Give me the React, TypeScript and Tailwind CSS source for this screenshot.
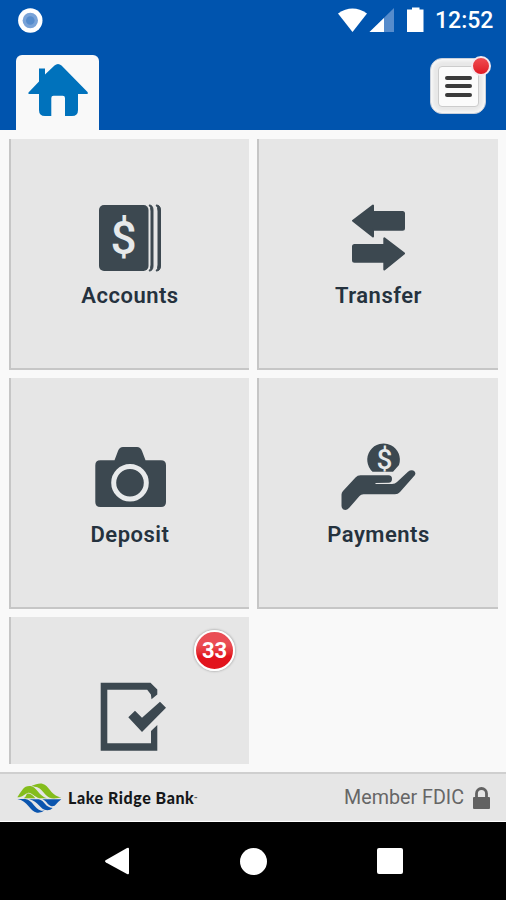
import type { ReactNode } from "react";

const INK = "#3c4850";

type TileProps = {
    icon: ReactNode;
    label: string;
    badge?: number;
};

function IconFrame({ children }: { children: ReactNode }) {
    return (
        <svg width="96" height="80" viewBox="0 0 96 80" fill={INK} className="shrink-0" aria-hidden="true">
            {children}
        </svg>
    );
}

function AccountsIcon() {
    return (
        <IconFrame>
            <rect x="17" y="9" width="49.5" height="66" rx="5" />
            <path d="M67 9Q71 9 71 14V70Q71 75 67 75Q69 73 69 69V15Q69 11 67 9Z" stroke={INK} strokeWidth="1" />
            <path d="M74 9Q78.5 9 78.5 14V70Q78.5 75 74 75Q76 73 76 69V15Q76 11 74 9Z" stroke={INK} strokeWidth="1" />
            <text
                x="41.5"
                y="58"
                textAnchor="middle"
                fill="#e6e9ea"
                className="font-['Roboto',sans-serif] text-[46px] font-medium"
            >
                $
            </text>
        </IconFrame>
    );
}

function TransferIcon() {
    return (
        <IconFrame>
            <g stroke={INK} strokeWidth="2" strokeLinejoin="round">
                <path d="M22 24.700 42 9.500V16H71.500Q73 16 73 17.500V32.200Q73 33.700 71.500 33.700H42V40.500Z" />
                <path d="M73 57.400 53.300 42.300V49H23.500Q22 49 22 50.500V64.200Q22 65.700 23.500 65.700H53.300V73.500Z" />
            </g>
        </IconFrame>
    );
}

function DepositIcon() {
    return (
        <IconFrame>
            <path d="M18.300 25.300H32.500L36 16Q37.500 12 41 12H55Q58.500 12 60 16L63.500 25.300H79Q84 25.300 84 30.300V67Q84 72 79 72H18.300Q13.300 72 13.300 67V30.300Q13.300 25.300 18.300 25.300Z" />
            <circle cx="48" cy="47.700" r="16.300" fill="none" stroke="#e8eaeb" strokeWidth="5" />
        </IconFrame>
    );
}

function PaymentsIcon() {
    return (
        <IconFrame>
            <g transform="translate(-1.500 0)">
                <path d="M43 36.700A16.300 16.300 0 1 1 69.500 30L63.500 36.700Z" />
                <text
                    x="55"
                    y="34"
                    textAnchor="middle"
                    fill="#e6e9ea"
                    className="font-['Roboto',sans-serif] text-[28px] font-medium"
                >
                    $
                </text>
                <path d="M12 59.500Q12 57.500 13.500 56L26 42.500Q28 40.300 31 40.300H59Q62.500 40.300 62.500 44T59 47.700L46 47.900V48.900H62.500Q65.500 48.900 67.500 46.900L78.500 36.700Q81 34.700 83.800 35.500Q86.800 37 85.500 40L70.500 57Q68.500 59.200 65.500 59.200H34Q31.500 59.200 30 61L20 72.500Q17 76 14 74.600Q12 73.600 12 71Z" />
            </g>
        </IconFrame>
    );
}

function ApprovalsIcon() {
    return (
        <IconFrame>
            <path d="M18.700 8.700H68.500L75.300 15.500V20.500L69.500 25.300L68.900 20.500L65.200 15.700H25.300V69.300H69V57L75.300 51V76.700H18.700Z" />
            <path d="M46.300 43.300 53 36.700 60 43.700 78 27.700 84 33.700 60 58Z" />
        </IconFrame>
    );
}

function Tile({ icon, label, badge }: TileProps) {
    return (
        <button
            type="button"
            className="relative flex h-[231px] flex-col items-center border-b-2 border-l-2 border-[#c6c6c6] bg-[#e6e6e6] pt-[57px]"
        >
            {icon}
            <span className="mt-1.5 text-[22px] leading-7 font-semibold tracking-[0.5px] text-[#25323e]">{label}</span>
            {badge !== undefined && (
                <span className="absolute top-[13px] right-[14px] flex size-[41px] items-center justify-center rounded-full border-[2.500px] border-white bg-linear-to-b from-[#ea4d55] from-35% to-[#e2141d] to-65% text-[22px] leading-none font-bold text-white shadow-[0_0_2px_1px_#bbb]">
                    {badge}
                </span>
            )}
        </button>
    );
}

function StatusBar() {
    return (
        <div className="flex h-10 items-center justify-between pr-[13px] pl-[18px]">
            <svg width="25" height="25" viewBox="0 0 25 25" aria-hidden="true">
                <circle cx="12.300" cy="12.500" r="12.200" fill="#fff" />
                <circle cx="12.300" cy="12.500" r="7.700" fill="#79a3d8" />
                <circle cx="12.300" cy="12.500" r="4.300" fill="#568ccc" />
            </svg>
            <div className="flex items-center">
                <svg width="90" height="26" viewBox="0 0 90 26" fill="#fff" aria-hidden="true">
                    <path d="M2 6.500Q16.500-3.500 31 6.500L16.500 25Z" />
                    <path d="M33.500 25 58 1V25Z" fill="#568ccc" />
                    <path d="M33.500 25 48 11V25Z" />
                    <path d="M72.500 2.500H76V.500H83.500V2.500H87.500V25H71V2.500Z" />
                </svg>
                <span className="ml-[9px] w-[58px] pt-0.5 text-[23px] leading-6 font-medium whitespace-nowrap text-white">
                    12:52
                </span>
            </div>
        </div>
    );
}

function Header() {
    return (
        <header className="h-[130px] shrink-0 bg-[#0054ae]">
            <StatusBar />
            <div className="flex items-start justify-between pt-[15px] pr-5 pl-4">
                <div className="flex h-[75px] w-[83px] justify-center rounded-t-md bg-[#f9f9f9] pt-[9px]">
                    <svg width="60" height="52" viewBox="0 0 60 52" fill="#0072bc" aria-label="Home">
                        <path d="M26.500 1.500Q30 -1.500 33.500 1.500L59.500 28Q60.500 30 59 30H50V46Q50 52 44 52H37V34Q37 31.700 34.700 31.700H25.500Q23.300 31.700 23.300 34V52H17Q11 52 11 46V30H1.500Q0 30 .5 28.500L11 17.500V4.500H17V10.500Z" />
                    </svg>
                </div>
                <button
                    type="button"
                    className="relative mt-[3px] flex size-[56px] items-center justify-center rounded-xl border border-[#c8d0dc] bg-[#e8e8e8] shadow-[inset_0_0_3px_2px_#f8f8f8]"
                >
                    <span className="flex size-[41px] flex-col items-center justify-center gap-[4.500px] rounded-[4px] border border-[#ccc] bg-[#fbfbfb]">
                        <span className="h-1 w-[27px] rounded-full bg-[#3b3b3b]" />
                        <span className="h-1 w-[27px] rounded-full bg-[#3b3b3b]" />
                        <span className="h-1 w-[27px] rounded-full bg-[#3b3b3b]" />
                    </span>
                    <span className="absolute -top-[3px] -right-[6px] size-5 rounded-full border-2 border-[#f3e8ee] bg-linear-to-b from-[#f04a50] to-[#e01522]" />
                </button>
            </div>
        </header>
    );
}

function BankLogo() {
    return (
        <div className="flex items-center gap-[6px]">
            <svg width="45" height="30" viewBox="0 0 135 90" aria-hidden="true">
                <g fill="#84bd1c">
                    <path d="M1 43Q10 28 18 18Q25 8 40 9C58 10 66 40 90 46H68C50 42 44 27 32 30C23 33 17 43 1 43Z" />
                    <path d="M44 8C55 6 64 0 76 2C98 7 98 36 133 43Q122 47 104 46C82 41 77 13 53 11Q49 10 44 8Z" />
                    <path d="M30 32Q43 30 55 46H20Q26 42 30 32Z" />
                </g>
                <g fill="#0b55ae">
                    <path d="M1 48H25C49 52 51 78 73 83Q80 84 83 82Q75 90 60 89C38 86 33 53 1 48Z" />
                    <path d="M36 49H65C84 53 84 74 107 75Q101 82 91 82C67 81 66 54 36 49Z" />
                    <path d="M76 49H133Q124 56 118 63Q113 71 104 70C92 68 90 54 76 49Z" />
                </g>
            </svg>
            <span className="font-['Lato',sans-serif] text-[16px] leading-5 font-black tracking-[0.550px] whitespace-nowrap text-[#151719]">
                Lake Ridge Bank
                <span className="align-[4px] text-[4px] leading-none tracking-normal">™</span>
            </span>
        </div>
    );
}

function Footer() {
    return (
        <footer className="flex h-[50px] shrink-0 items-center justify-between border-t-2 border-b border-t-[#cfcfcf] border-b-white bg-[#e6e6e6] pr-4 pl-[17px]">
            <BankLogo />
            <div className="flex items-center gap-[9px]">
                <span className="text-[19.700px] leading-6 text-[#666]">Member FDIC</span>
                <svg width="17" height="22" viewBox="0 0 17 22" fill="#626262" aria-hidden="true">
                    <rect y="10" width="17" height="12" rx="1" />
                    <path d="M3.500 11V6.500a5 5 0 0 1 10 0V11" fill="none" stroke="#626262" strokeWidth="2.800" />
                </svg>
            </div>
        </footer>
    );
}

function NavigationBar() {
    return (
        <nav className="flex h-[78px] shrink-0 items-center justify-between bg-black pr-[103px] pl-[104px]">
            <svg width="26" height="28" viewBox="0 0 26 28" fill="#fff" aria-label="Back">
                <path d="M2 13 23 1Q25 0 25 2V26Q25 28 23 27L2 15.500Q0 14.200 2 13Z" />
            </svg>
            <span className="size-[27px] rounded-full bg-white" />
            <span className="size-[26px] rounded-[2px] bg-white" />
        </nav>
    );
}

export default function App() {
    return (
        <div className="flex h-[900px] w-[506px] flex-col overflow-hidden bg-[#f9f9f9] font-['Roboto',sans-serif]">
            <Header />
            <main className="h-[642px] shrink-0 py-[9px] pr-2 pl-[9px]">
                <div className="grid h-[625px] grid-cols-[240px_241px] content-start gap-2 overflow-hidden">
                    <Tile icon={<AccountsIcon />} label="Accounts" />
                    <Tile icon={<TransferIcon />} label="Transfer" />
                    <Tile icon={<DepositIcon />} label="Deposit" />
                    <Tile icon={<PaymentsIcon />} label="Payments" />
                    <div className="h-[147px] overflow-hidden">
                        <div className="grid">
                            <Tile icon={<ApprovalsIcon />} label="" badge={33} />
                        </div>
                    </div>
                </div>
            </main>
            <Footer />
            <NavigationBar />
        </div>
    );
}
